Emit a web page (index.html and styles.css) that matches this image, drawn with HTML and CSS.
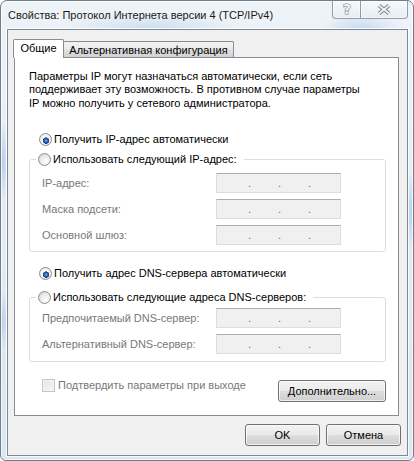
FILE: index.html
```html
<!DOCTYPE html>
<html lang="ru">
<head>
<meta charset="utf-8">
<title>Свойства: Протокол Интернета версии 4 (TCP/IPv4)</title>
<link rel="stylesheet" href="styles.css">
</head>
<body>
<div class="window">
  <div class="titlebar">
    <span class="title">Свойства: Протокол Интернета версии 4 (TCP/IPv4)</span>
  </div>
  <div class="caption">
    <div class="cap-btn cap-help">
      <svg width="12" height="14" viewBox="0 0 12 14"><text x="6" y="12" text-anchor="middle" class="help-glyph">?</text></svg>
    </div>
    <div class="cap-btn cap-close">
      <svg width="14" height="11" viewBox="0 0 14 11">
        <g class="x-outer"><line x1="2" y1="1.5" x2="12" y2="9.5"/><line x1="12" y1="1.5" x2="2" y2="9.5"/></g>
        <g class="x-inner"><line x1="2" y1="1.5" x2="12" y2="9.5"/><line x1="12" y1="1.5" x2="2" y2="9.5"/></g>
      </svg>
    </div>
  </div>
  <div class="client">
    <div class="tabs">
      <div class="tab active">Общие</div>
      <div class="tab">Альтернативная конфигурация</div>
    </div>
    <div class="panel">
      <p class="intro">Параметры IP могут назначаться автоматически, если сеть<br>поддерживает эту возможность. В противном случае параметры<br>IP можно получить у сетевого администратора.</p>

      <div class="option opt-auto-ip"><span class="radio checked"></span><span>Получить IP-адрес автоматически</span></div>

      <fieldset class="group group-ip">
        <legend><span class="option"><span class="radio"></span><span>Использовать следующий IP-адрес:</span></span></legend>
        <div class="row"><span class="lbl">IP-адрес:</span><span class="ipbox"><span>.</span><span>.</span><span>.</span></span></div>
        <div class="row"><span class="lbl">Маска подсети:</span><span class="ipbox"><span>.</span><span>.</span><span>.</span></span></div>
        <div class="row"><span class="lbl">Основной шлюз:</span><span class="ipbox"><span>.</span><span>.</span><span>.</span></span></div>
      </fieldset>

      <div class="option opt-auto-dns"><span class="radio checked"></span><span>Получить адрес DNS-сервера автоматически</span></div>

      <fieldset class="group group-dns">
        <legend><span class="option"><span class="radio"></span><span>Использовать следующие адреса DNS-серверов:</span></span></legend>
        <div class="row"><span class="lbl">Предпочитаемый DNS-сервер:</span><span class="ipbox"><span>.</span><span>.</span><span>.</span></span></div>
        <div class="row"><span class="lbl">Альтернативный DNS-сервер:</span><span class="ipbox"><span>.</span><span>.</span><span>.</span></span></div>
      </fieldset>

      <div class="bottom-row">
        <div class="check-opt"><span class="checkbox"></span><span>Подтвердить параметры при выходе</span></div>
        <button class="btn btn-advanced">Дополнительно...</button>
      </div>
    </div>
    <div class="footer">
      <button class="btn btn-ok">OK</button>
      <button class="btn btn-cancel">Отмена</button>
    </div>
  </div>
</div>
</body>
</html>
```
FILE: styles.css
```css
html, body {
  margin: 0;
  padding: 0;
  background: #ffffff;
}

body {
  font-family: "Liberation Sans", Arial, sans-serif;
  font-size: 11px;
  color: #000;
}

.window {
  position: relative;
  width: 414px;
  height: 461px;
  box-sizing: border-box;
  border: 1px solid #6f7c89;
  border-radius: 7px 7px 6px 6px;
  padding: 0 5px 4px 6px;
  display: flex;
  flex-direction: column;
  overflow: hidden;
  background:
    radial-gradient(ellipse 90px 14px at 150px 26px, rgba(170, 200, 232, 0.45), transparent),
    radial-gradient(ellipse 40px 16px at 360px 28px, rgba(160, 195, 232, 0.5), transparent),
    radial-gradient(ellipse 5px 40px at 2px 160px, rgba(140, 180, 228, 0.55), transparent),
    radial-gradient(ellipse 5px 30px at 2px 320px, rgba(140, 180, 228, 0.45), transparent),
    radial-gradient(ellipse 5px 40px at 410px 210px, rgba(140, 180, 228, 0.5), transparent),
    linear-gradient(180deg, #eef3f8 0%, #e2eaf3 60%, #dce6f0 100%);
  box-shadow: inset 0 0 0 1px rgba(255, 255, 255, 0.75);
}

.titlebar {
  height: 28px;
  flex: none;
  display: flex;
  align-items: center;
  padding-left: 1px;
}

.title {
  color: #1a1a1a;
  font-size: 11px;
}

.caption {
  position: absolute;
  top: -1px;
  right: 5px;
  display: flex;
  height: 19px;
}

.cap-btn {
  box-sizing: border-box;
  height: 19px;
  display: flex;
  align-items: center;
  justify-content: center;
  border: 1px solid rgba(70, 85, 100, 0.55);
  border-top: none;
  background: linear-gradient(180deg, rgba(255, 255, 255, 0.55), rgba(225, 233, 242, 0.6));
  box-shadow: inset 0 0 0 1px rgba(255, 255, 255, 0.5);
}

.cap-help {
  width: 28px;
  border-radius: 0 0 0 4px;
  border-right: none;
}

.cap-close {
  width: 48px;
  border-radius: 0 0 4px 0;
}

.help-glyph {
  font-family: "DejaVu Sans", sans-serif;
  font-size: 14px;
  font-weight: bold;
  fill: #f2f4f6;
  stroke: #7e8893;
  stroke-width: 1.2px;
  paint-order: stroke;
}

.x-outer line {
  stroke: #7e8893;
  stroke-width: 3.8;
}

.x-inner line {
  stroke: #f2f4f6;
  stroke-width: 1.7;
}

.client {
  flex: 1;
  display: flex;
  flex-direction: column;
  background: #f0f0f0;
  border: 1px solid #7d8995;
  box-shadow: 0 0 0 1px rgba(255, 255, 255, 0.8);
}

.tabs {
  display: flex;
  align-items: flex-end;
  height: 18px;
  margin: 9px 0 0 5px;
}

.tab {
  box-sizing: border-box;
  border: 1px solid #898c95;
  border-bottom: none;
  border-radius: 2px 2px 0 0;
  display: flex;
  align-items: center;
  justify-content: center;
  white-space: nowrap;
}

.tab.active {
  position: relative;
  z-index: 2;
  width: 51px;
  height: 19px;
  margin-bottom: -1px;
  padding-bottom: 3px;
  background: #ffffff;
}

.tab:not(.active) {
  width: 171px;
  height: 16px;
  margin-left: -1px;
  background: linear-gradient(180deg, #f2f2f2 0%, #ebebeb 45%, #dddddd 55%, #d2d2d2 100%);
}

.panel {
  box-sizing: border-box;
  width: 385px;
  height: 359px;
  margin-left: 6px;
  border: 1px solid #898c95;
  background: #ffffff;
  padding: 12px 12px 0 14px;
  display: flex;
  flex-direction: column;
  flex: none;
}

.intro {
  margin: 0;
  line-height: 13.33px;
}

.option {
  display: flex;
  align-items: center;
  height: 13px;
  gap: 2px;
  white-space: nowrap;
}

.opt-auto-ip {
  margin: 23px 0 0 10px;
}

.opt-auto-dns {
  margin: 15px 0 0 10px;
}

.radio {
  flex: none;
  box-sizing: border-box;
  width: 13px;
  height: 13px;
  border-radius: 50%;
  border: 1px solid #8a8c8e;
  background: radial-gradient(circle at 65% 70%, #ffffff 0, #f1f1f1 35%, #d2d2d2 100%);
}

.radio.checked {
  background:
    radial-gradient(circle at 55% 60%, #7ab4ea 0, #2a68b2 1.6px, #0e3f82 3px, transparent 3.4px),
    radial-gradient(circle at 50% 50%, #ffffff 0, #f6f6f6 4px, #d6d6d6 100%);
}

.group {
  margin: 0;
  min-width: 0;
  border: 1px solid #d5dfe5;
  border-radius: 3px;
  display: flex;
  flex-direction: column;
  gap: 6px;
}

.group legend {
  padding: 0 7px 0 2px;
  margin: 0;
  height: 13px;
}

.group-ip {
  margin-top: 7px;
  padding: 7px 44px 6px 6px;
}

.group-dns {
  margin-top: 11px;
  padding: 4px 44px 7px 6px;
}

.row {
  display: flex;
  align-items: center;
  height: 20px;
  padding-left: 6px;
}

.lbl {
  width: 174px;
  flex: none;
  color: #787878;
  white-space: nowrap;
}

.ipbox {
  box-sizing: border-box;
  width: 125px;
  height: 20px;
  flex: none;
  display: flex;
  padding-left: 31px;
  line-height: 18px;
  background: #f0f0f0;
  border: 1px solid #dadde2;
  border-top-color: #abadb1;
  color: #6d6d6d;
}

.ipbox span {
  width: 30px;
}

.bottom-row {
  margin-top: 17px;
  display: flex;
  justify-content: space-between;
  align-items: flex-start;
  padding-left: 13px;
}

.check-opt {
  display: flex;
  align-items: center;
  gap: 3px;
  height: 13px;
  color: #787878;
  white-space: nowrap;
}

.checkbox {
  flex: none;
  box-sizing: border-box;
  width: 13px;
  height: 13px;
  border: 1px solid #c2c4c6;
  background: linear-gradient(135deg, #e4e4e4, #f7f7f7);
  box-shadow: inset 0 0 0 1px #f4f4f4;
}

.btn {
  box-sizing: border-box;
  font-family: inherit;
  font-size: 11px;
  color: #000;
  padding: 0;
  border: 1px solid #707070;
  border-radius: 3px;
  background: linear-gradient(180deg, #f2f2f2 0%, #ebebeb 48%, #dddddd 52%, #cfcfcf 100%);
  box-shadow: inset 0 0 0 1px rgba(255, 255, 255, 0.7);
}

.btn-advanced {
  width: 108px;
  height: 22px;
  margin-top: 1px;
}

.footer {
  display: flex;
  justify-content: flex-end;
  gap: 6px;
  margin-top: 8px;
  padding-right: 6px;
}

.btn-ok,
.btn-cancel {
  width: 75px;
  height: 22px;
}
```
